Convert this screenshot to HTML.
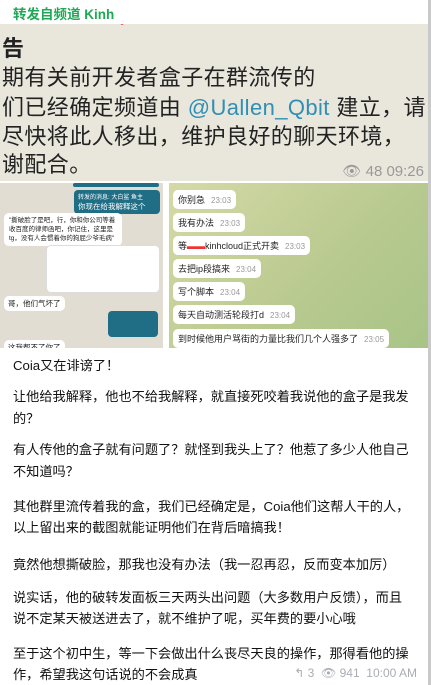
<!DOCTYPE html>
<html><head><meta charset="utf-8"><style>
*{margin:0;padding:0;box-sizing:border-box}
body{width:431px;height:685px;background:#fff;overflow:hidden;position:relative;font-family:"Liberation Sans","Noto Sans CJK SC",sans-serif;color:#111}
.hdr{position:absolute;left:13px;top:3px;font-size:13.5px;color:#1fa855;font-weight:bold}
.img1{position:absolute;left:0;top:24px;width:428px;height:157px;background:#e9e6dc;overflow:hidden}
.img1 .l{position:absolute;left:2px;font-size:22px;color:#222;white-space:nowrap;letter-spacing:0.4px}
.img2{position:absolute;left:0;top:183px;width:163px;height:165px;background:#e1ddd2;overflow:hidden}
.img3{position:absolute;left:169px;top:183px;width:259px;height:165px;background:linear-gradient(135deg,#d6d9a6,#b7c98f 60%,#a9c486);overflow:hidden}
.b{position:absolute;background:#fff;border-radius:5px;font-size:9px;color:#222;white-space:nowrap;padding:3px 5px}
.b span{color:#999;font-size:8px;margin-left:6px}
.db{position:absolute;background:#1f6e85;color:#fff;border-radius:4px;font-size:6px;padding:2px 4px}
.t{position:absolute;left:13px;font-size:13.2px;color:#111;white-space:nowrap}
.edge{position:absolute;right:0;top:0;width:3px;height:685px;background:#c9c9c9}
.meta{position:absolute;right:14px;top:666px;font-size:12px;color:#a8adb3;white-space:nowrap}
</style></head><body>
<div class="hdr">转发自频道 Kinh</div>
<div class="img1">
<div class="l" style="top:-19px;color:#f06060;font-size:18px">Kirewardo Project</div>
<div class="l" style="top:7px;font-weight:bold">告</div>
<div class="l" style="top:36px">期有关前开发者盒子在群流传的</div>
<div class="l" style="top:66px">们已经确定频道由 <span style="color:#2f8fb5">@Uallen_Qbit</span> 建立，请</div>
<div class="l" style="top:95px">尽快将此人移出，维护良好的聊天环境，</div>
<div class="l" style="top:123px">谢配合。</div>
<div style="position:absolute;right:4px;top:138px;font-size:15px;color:#999">👁 48 09:26</div>
</div>
<div class="img2">
<div class="db" style="left:73px;top:0;width:86px;height:4px;padding:0"></div>
<div class="db" style="left:74px;top:7px;width:86px">转发的消息: 大白鲨 鱼主<br><span style="font-size:7.5px">你现在给我解释这个</span></div>
<div class="b" style="left:4px;top:30px;font-size:6.5px;line-height:9px;padding:3px 5px;width:118px;white-space:normal">"撕破脸了是吧，行，你和你公司等着收百度的律师函吧，你记住，这里是tg，没有人会惯着你的狗屁少爷毛病"</div>
<div class="b" style="left:46px;top:62px;width:114px;height:48px;border:1px solid #ddd"></div>
<div class="b" style="left:4px;top:113px;font-size:7.5px;padding:2px 4px">哥，他们气坏了</div>
<div class="db" style="left:108px;top:128px;width:50px;height:26px"></div>
<div class="b" style="left:4px;top:157px;font-size:7.5px;padding:2px 4px">这我帮不了你了</div>
</div>
<div class="img3">
<div class="b" style="left:4px;top:7px">你别急<span>23:03</span></div>
<div class="b" style="left:4px;top:30px">我有办法<span>23:03</span></div>
<div class="b" style="left:4px;top:53px">等<span style="color:#e33;font-size:9px;margin:0">▬▬</span>kinhcloud正式开卖<span>23:03</span></div>
<div class="b" style="left:4px;top:76px">去把ip段搞来<span>23:04</span></div>
<div class="b" style="left:4px;top:99px">写个脚本<span>23:04</span></div>
<div class="b" style="left:4px;top:122px">每天自动测活轮段打d<span>23:04</span></div>
<div class="b" style="left:4px;top:146px">到时候他用户骂街的力量比我们几个人强多了<span>23:05</span></div>
</div>
<div class="t" style="top:355px">Coia又在诽谤了！</div>
<div class="t" style="top:386px">让他给我解释，他也不给我解释，就直接死咬着我说他的盒子是我发</div>
<div class="t" style="top:408px">的？</div>
<div class="t" style="top:439px">有人传他的盒子就有问题了？就怪到我头上了？他惹了多少人他自己</div>
<div class="t" style="top:461px">不知道吗？</div>
<div class="t" style="top:496px">其他群里流传着我的盒，我们已经确定是，Coia他们这帮人干的人，</div>
<div class="t" style="top:517px">以上留出来的截图就能证明他们在背后暗搞我！</div>
<div class="t" style="top:554px">竟然他想撕破脸，那我也没有办法（我一忍再忍，反而变本加厉）</div>
<div class="t" style="top:587px">说实话，他的破转发面板三天两头出问题（大多数用户反馈），而且</div>
<div class="t" style="top:608px">说不定某天被送进去了，就不维护了呢，买年费的要小心哦</div>
<div class="t" style="top:643px">至于这个初中生，等一下会做出什么丧尽天良的操作，那得看他的操</div>
<div class="t" style="top:664px">作，希望我这句话说的不会成真</div>
<div class="meta">↰ 3 &nbsp;👁 941 &nbsp;10:00 AM</div>
<div class="edge"></div>
</body></html>
